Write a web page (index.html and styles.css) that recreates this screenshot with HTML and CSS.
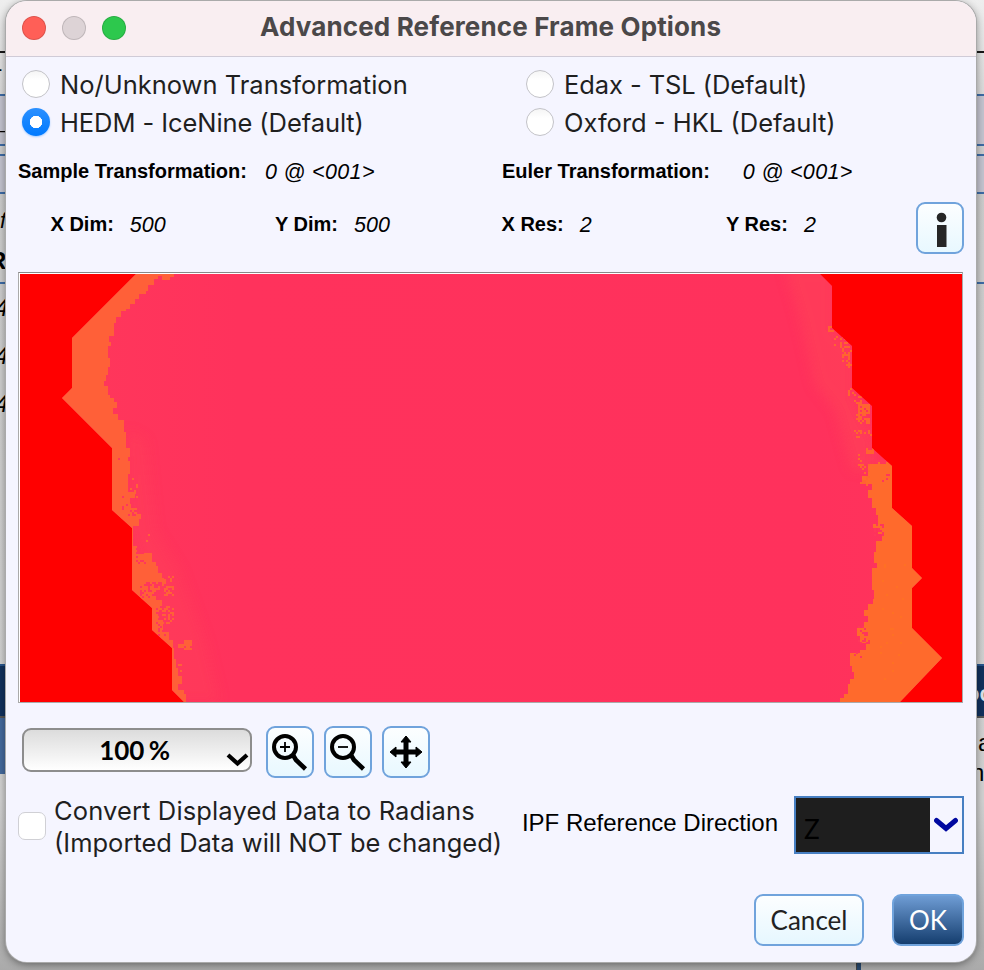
FILE: index.html
```html
<!DOCTYPE html>
<html lang="en">
<head>
<meta charset="utf-8">
<title>Advanced Reference Frame Options</title>
<link rel="stylesheet" href="styles.css">
</head>
<body>
<div class="desktop">
  <div class="backdrop left">
    <div class="b-top"></div><div class="b-gap">-</div><div class="b-band one">_</div><div class="b-space"></div><div class="b-band two"></div>
    <div class="b-text"><i>f</i><b>R</b></div>
    <div class="b-list"><i>4</i><i>4</i><i>4</i></div>
    <div class="b-navy"></div><div class="b-blue"></div>
  </div>
  <div class="backdrop right">
    <div class="b-top"></div><div class="b-gap"></div><div class="b-band one"></div><div class="b-space"></div><div class="b-band two"></div>
    <div class="b-text"></div>
    <div class="b-list"></div>
    <div class="b-navy">oc</div><div class="b-copy"><span>a</span><span>n</span></div>
  </div>
  <div class="b-divider"></div>
  <main class="dialog">
    <header class="titlebar">
      <div class="lights"><span class="light red"></span><span class="light gray"></span><span class="light green"></span></div>
      <h1>Advanced Reference Frame Options</h1>
    </header>
    <section class="radios">
      <label class="opt"><span class="radio"></span><span class="caption">No/Unknown Transformation</span></label>
      <label class="opt"><span class="radio"></span><span class="caption tight">Edax - TSL (Default)</span></label>
      <label class="opt"><span class="radio on"></span><span class="caption tight">HEDM - IceNine (Default)</span></label>
      <label class="opt"><span class="radio"></span><span class="caption">Oxford - HKL (Default)</span></label>
    </section>
    <section class="transforms">
      <div class="pair"><b>Sample Transformation:</b><i>0 @ &lt;001&gt;</i></div>
      <div class="pair wide"><b>Euler Transformation:</b><i>0 @ &lt;001&gt;</i></div>
    </section>
    <section class="dims">
      <div class="pair"><b>X Dim:</b><i>500</i></div>
      <div class="pair"><b>Y Dim:</b><i>500</i></div>
      <div class="pair"><b>X Res:</b><i>2</i></div>
      <div class="pair"><b>Y Res:</b><i>2</i></div>
      <button class="tool info"><svg width="44" height="48" viewBox="0 0 44 48"><circle cx="23.500" cy="13.500" r="4.800" fill="#262626"/><path d="M19 21h9.500v22H19z" fill="#262626"/></svg></button>
    </section>
    <div class="map">
      <svg width="942" height="428" viewBox="20 274 942 428" shape-rendering="crispEdges">
        <defs>
          <linearGradient id="pink" x1="0" x2="1" y1="0" y2="0"><stop offset="0" stop-color="#ff375b"/><stop offset=".2" stop-color="#ff325c"/><stop offset=".85" stop-color="#ff315c"/><stop offset="1" stop-color="#ff345b"/></linearGradient>
          <filter id="soft" x="-50%" y="-20%" width="200%" height="140%"><feGaussianBlur stdDeviation="6"/></filter>
          <clipPath id="body"><path d="M136 274 72 338V388L62 398 112 448V510L132 528V590L152 608V630L172 648V690L184 702H900L942 658 912 628V588L922 578 912 568V526L892 508V466L872 448V406L852 388V346L832 328V286L820 274Z"/></clipPath>
        </defs>
        <path fill="#f00" d="M20 274h942v428H20z"/>
        <g clip-path="url(#body)">
          <path fill="url(#pink)" d="M60 274h890v428H60z"/>
          <g filter="url(#soft)" fill="#ff4059" opacity=".7">
            <path d="M785 268H835V330L855 350V400L875 440V470L852 470 835 410 815 385 800 320Z"/>
            <path d="M128 430 146 440 155 530 180 570 205 640 220 702H170L150 600 130 530Z" opacity=".6"/>
          </g>
          <path fill="#ff6038" d="M60 270H182V274H174V277H170V280H162V276H158V279H154V285H148V291H146V294H139V299H135V304H130V309H126V311H121V317H116V323H114V336H109V342H111V346H108V358H110V367H108V375H106V381H104V386H108V395H110V398H114V402H117V408H113V414H118V420H124V432H126V448H130V457H128V461H130V474H128V492H135V498H131V508H137V514H141V519H139V526H133V546H137V553H152V562H156V566H158V573H162V579H166V584H160V590H156V600H162V610H159V620H163V632H169V640H173V648H174V659H176V668H178V676H182V684H178V690H184V694H186V702H60Z"/>
          <path fill="#ff6a2c" d="M950 450V702H840V698H844V694H848V684H850V679H854V672H852V666H850V653H860V650H866V643H860V636H857V628H864V622H868V616H864V610H868V604H873V599H874V590H872V568H877V563H874V552H876V541H882V534H878V528H873V524H878V515H876V508H872V498H868V490H872V484H866V480H862V476H868V464H876V460H892V450Z"/>
          <g id="speckles"></g>
        </g>
      </svg>
    </div>
    <section class="tools">
      <div class="zoom"><span>100 %</span><svg width="24" height="18" viewBox="0 0 24 18"><path d="m2 4 9.500 8.500L21 4" fill="none" stroke="#000" stroke-width="4.200"/></svg></div>
      <button class="tool"><svg width="44" height="48" viewBox="0 0 44 48" fill="none" stroke="#000"><circle cx="17" cy="19" r="11" stroke-width="4"/><path d="m25 27 3 5 9.500 9" stroke-width="4.500"/><path d="M12 19h10M17 14v10" stroke-width="1.800"/></svg></button>
      <button class="tool"><svg width="44" height="48" viewBox="0 0 44 48" fill="none" stroke="#000"><circle cx="17" cy="19" r="11" stroke-width="4"/><path d="m25 27 3 5 9.500 9" stroke-width="4.500"/><path d="M12 19h10" stroke-width="1.800"/></svg></button>
      <button class="tool"><svg width="44" height="48" viewBox="0 0 44 48"><path d="M22 8l5 6h-3v8h8v-3l6 5-6 5v-3h-8v8h3l-5 6-5-6h3v-8h-8v3l-6-5 6-5v3h8v-8h-3z" stroke="#000" stroke-linejoin="round"/></svg></button>
    </section>
    <section class="settings">
      <label class="convert"><span class="check"></span><span><span class="line-one">Convert Displayed Data to Radians</span><br>(Imported Data will NOT be changed)</span></label>
      <div class="ipf"><span>IPF Reference Direction</span><div class="combo"><span class="value">Z</span><span class="arrow"><svg width="24" height="16" viewBox="0 0 24 16"><path d="m2.500 3.500 9.500 8 9.500-8" fill="none" stroke="#0008a0" stroke-width="5" stroke-linecap="round"/></svg></span></div></div>
    </section>
    <footer class="actions"><button class="btn cancel">Cancel</button><button class="btn ok">OK</button></footer>
  </main>
</div>
<script src="speckles.js"></script>
</body>
</html>
```
FILE: speckles.js
```js
// Scatter 2px measurement cells along the grain boundary.
// Each region: x, y, width, height, density, colour
const regions = [
  [122, 496, 16, 20, .25, '#ff375b'], [136, 546, 12, 18, .22, '#ff375b'],
  [140, 582, 22, 16, .35, '#ff375b'], [156, 606, 12, 30, .3, '#ff375b'],
  [130, 478, 8, 20, .2, '#ff6038'], [162, 576, 12, 20, .35, '#ff6038'], [162, 606, 12, 18, .35, '#ff6038'],
  [140, 530, 10, 12, .08, '#ff6038'], [184, 640, 8, 9, .9, '#ff6038'], [178, 644, 6, 4, .6, '#ff6038'],
  [174, 664, 8, 34, .2, '#ff6038'], [114, 452, 10, 10, .06, '#ff375b'],
  [834, 336, 14, 12, .32, '#ff642f'], [842, 346, 10, 22, .28, '#ff642f'], [828, 326, 6, 6, .5, '#ff642f'],
  [848, 388, 8, 8, .6, '#ff642f'], [854, 396, 8, 8, .5, '#ff642f'], [858, 404, 12, 10, .85, '#ff642f'],
  [856, 414, 14, 10, .55, '#ff642f'], [854, 430, 18, 8, .14, '#ff642f'],
  [856, 454, 6, 12, .3, '#ff642f'], [860, 464, 10, 22, .35, '#ff642f'], [866, 448, 8, 5, .6, '#ff642f'],
  [876, 460, 14, 4, .5, '#ff375b'], [882, 474, 8, 10, .25, '#ff375b'], [874, 524, 10, 12, .3, '#ff375b'],
  [858, 626, 12, 18, .25, '#ff375b'], [854, 652, 8, 6, .3, '#ff375b'],
  [880, 560, 26, 120, .02, '#ff7024']
];
let seed = 41;
const random = () => (seed = (seed * 16807) % 2147483647) / 2147483647;
const layer = document.getElementById('speckles');
for (const [x, y, w, h, density, colour] of regions) {
  let d = '';
  for (let j = 0; j < h; j += 2)
    for (let i = 0; i < w; i += 2)
      if (random() < density) d += `M${x + i} ${y + j}h2v2h-2z`;
  const path = document.createElementNS('http://www.w3.org/2000/svg', 'path');
  path.setAttribute('d', d);
  path.setAttribute('fill', colour);
  layer.append(path);
}
```
FILE: styles.css
```css
* { box-sizing: border-box; }
body { margin: 0; }
button { padding: 0; font: inherit; }
.desktop { position: relative; width: 984px; height: 970px; overflow: hidden; background: linear-gradient(#eee 0, #ccc 160px, #d2d2d2 800px, #b0b0b0 950px, #aaa); }

.backdrop { position: absolute; top: 0; display: flex; flex-direction: column; width: 9px; height: 970px; overflow: hidden; font: 22px "Liberation Sans", sans-serif; color: #000; }
.backdrop.left { left: 0; }
.backdrop.right { left: 975px; }
.backdrop > div { flex: none; overflow: hidden; }
.b-top { height: 53px; border-bottom: 2px solid #171717; }
.b-gap { height: 41px; line-height: 32px; text-indent: -5px; }
.b-band { border: solid #3d6ba5; border-width: 2px 0; background: #c4c4cf; }
.b-band.one { height: 52px; line-height: 60px; }
.left .b-band.one { line-height: 50px; }
.b-space { height: 8px; }
.b-band.two { height: 40px; }
.b-text { display: flex; flex-direction: column; height: 90px; padding-top: 13px; border-bottom: 2px solid #3d6ba5; line-height: 28px; }
.b-text b { margin: 12px 0 0 -11px; font-size: 24px; }
.b-list { display: flex; flex-direction: column; height: 380px; line-height: 48px; }
.b-list i { margin-left: -5px; font-size: 24px; }
.b-navy { height: 54px; border-top: 2px solid #28558d; border-bottom: 2px solid #555; background: #11315d; color: #dde3ea; font-weight: bold; line-height: 56px; }
.right .b-navy { text-indent: -9px; }
.b-blue { height: 56px; background: #44699d; }
.b-copy { display: flex; flex-direction: column; padding: 10px 0 0 3px; font-size: 24px; line-height: 30px; }
.b-copy span + span { margin-left: -7px; }
.b-divider { position: absolute; left: 856px; top: 955px; width: 5px; height: 15px; background: #28496f; border-left: 1px solid #444; }

.dialog { position: absolute; left: 6px; top: 1px; width: 970px; height: 961px; overflow: hidden; display: flex; flex-direction: column; border-radius: 21px; background: #f5f5ff; box-shadow: 0 0 0 1px #aaa, 0 2px 8px #0007; font-family: "Liberation Sans", Arial, sans-serif; color: #000; }
.titlebar { flex: none; display: flex; align-items: center; height: 56px; padding: 0 16px 2px; border-bottom: 1px solid #d0cbd7; background: #f9eef1; }
.lights { display: flex; gap: 16px; }
.light { width: 24px; height: 24px; border-radius: 50%; border: 1px solid #0002; }
.red { background: #ff5f57; }
.gray { background: #ddd3d6; }
.green { background: #2dc84d; }
h1 { margin: -2px 0 0 134px; font: 700 26px/32px Inter, sans-serif; letter-spacing: .14px; color: #4b4849; white-space: nowrap; }

.radios { flex: none; display: grid; grid-template-columns: 504px auto; grid-auto-rows: 38px; height: 76px; margin: 8px 0 0 16px; }
.opt { display: flex; align-items: center; gap: 10px; font: 25.5px/30px Inter, sans-serif; color: #1f1f1f; white-space: nowrap; }
.caption { padding-top: 2px; }
.tight { letter-spacing: -.08px; }
.radio { width: 28px; height: 28px; border-radius: 50%; border: 1px solid #c3c3c8; background: linear-gradient(#f5f5f5, #fff 35%); }
.radio.on { border: 0; background: radial-gradient(circle, #fff 0 6px, transparent 6.5px), linear-gradient(#2b90ff, #007aff); box-shadow: 0 1px 2px #007aff55; }

.transforms { flex: none; display: grid; grid-template-columns: 484px auto; height: 47px; padding-left: 12px; font-size: 20px; line-height: 60px; }
.pair { display: flex; gap: 18px; white-space: nowrap; }
.pair i { padding-top: 1px; font-size: 21.5px; }
.transforms i { letter-spacing: .35px; }
.pair.wide { gap: 33px; }
.dims { flex: none; display: grid; grid-template-columns: 224.500px 226.500px 224.500px 189.500px 48px; height: 84px; padding: 14px 0 0 44.500px; font-size: 20px; line-height: 45px; }
.dims .pair { gap: 16px; }
.tool { flex: none; display: block; width: 48px; height: 52px; border: 2px solid #70a3dc; border-radius: 9px; background: linear-gradient(#fcfeff, #e8f8ff); }
.tool svg { display: block; }
.map { flex: none; width: 945px; height: 431px; margin-left: 12px; border: 1px solid #aaa; border-top-color: #888; padding: 1px 0 0 1px; background: #fff; }
.map svg { display: block; }

.tools { flex: none; display: flex; gap: 10px; height: 69px; margin: 23px 0 0 16px; }
.zoom { display: flex; align-items: center; justify-content: flex-end; width: 230px; height: 44px; margin: 2px 4px 0 0; border: 2px solid #8d8d8d; border-radius: 9px; background: linear-gradient(#dcdcdc, #fff); font: 700 26px/40px Lato, sans-serif; word-spacing: -2px; }
.zoom svg { margin: 20px 0 0 56px; }
.settings { flex: none; display: flex; justify-content: space-between; height: 67px; padding: 0 12px; }
.convert { display: flex; gap: 8px; font: 25.5px/32px Inter, sans-serif; color: #1f1f1f; white-space: nowrap; }
.line-one { letter-spacing: .13px; }
.check { width: 28px; height: 28px; margin-top: 17px; border: 1px solid #d0d0d5; border-radius: 7px; background: #fff; }
.ipf { display: flex; gap: 16px; font-size: 24px; line-height: 56px; white-space: nowrap; }
.combo { display: flex; width: 170px; height: 58px; margin-top: 1px; border: 2px solid #477fc2; background: #1e1e1e; }
.value { flex: 1; padding-left: 8px; font: 26px/62px Lato, sans-serif; }
.arrow { display: grid; place-items: center; width: 32px; background: #f5f5ff; }
.actions { flex: none; display: flex; justify-content: flex-end; gap: 28px; padding: 32px 12px 0; font: 26px/48px Lato, sans-serif; }
.btn { height: 52px; border: 2px solid #70a3dc; border-radius: 9px; }
.cancel { width: 110px; background: linear-gradient(#fcfeff, #e6f7ff); color: #222; }
.ok { width: 72px; background: linear-gradient(#6e9cd4, #153e6f); color: #fff; }
```
